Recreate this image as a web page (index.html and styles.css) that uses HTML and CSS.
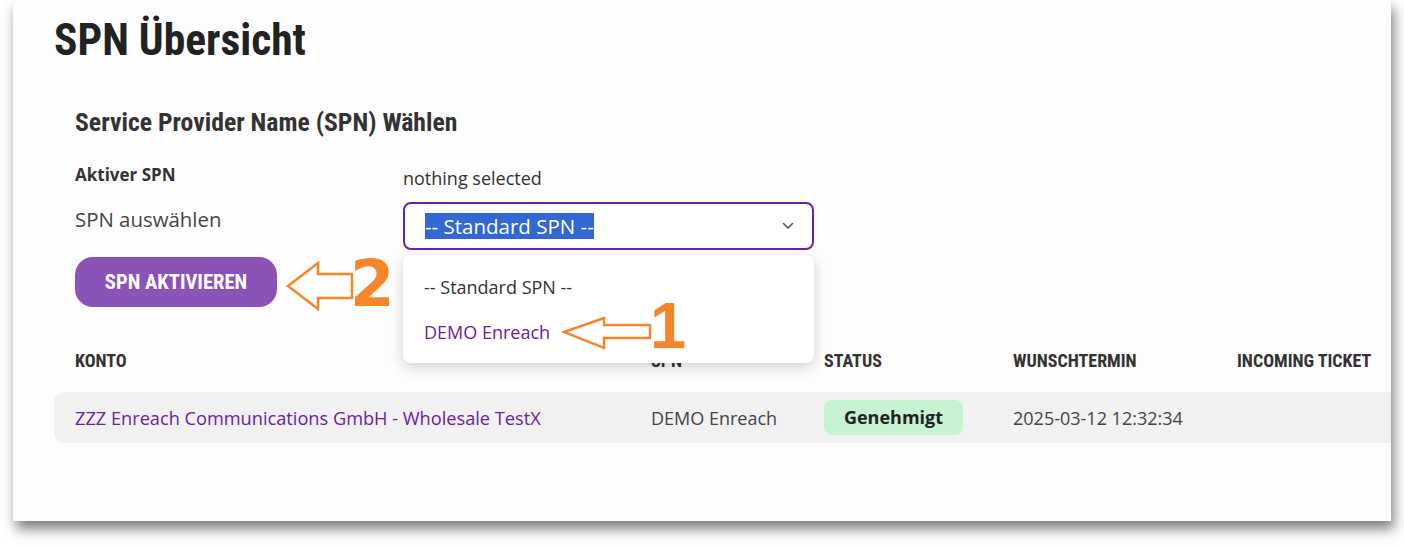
FILE: index.html
```html
<!DOCTYPE html>
<html>
  <head>
    <title>SPN Übersicht</title>
    <meta http-equiv="Content-Type" content="text/html; charset=UTF-8"/>
    <link rel="stylesheet" href="styles.css">
  </head>
  <body>
    <div class="frame">
      <main class="page">
        <h1>SPN Übersicht</h1>

        <section class="picker">
          <h2>Service Provider Name (SPN) Wählen</h2>
          <div class="form">
            <div class="label strong">Aktiver SPN</div>
            <div class="value">nothing selected</div>
            <div class="label">SPN auswählen</div>
            <div class="select-wrap">
              <div class="select">
                <span class="selected-text">-- Standard SPN --</span>
                <svg class="chevron" viewBox="0 0 12 8" width="12" height="8">
                  <path d="M1.5 1.5 L6 6 L10.5 1.5" fill="none" stroke="#555" stroke-width="1.6" stroke-linecap="round" stroke-linejoin="round"/>
                </svg>
              </div>
              <ul class="options">
                <li>-- Standard SPN --</li>
                <li class="accent">DEMO Enreach</li>
              </ul>
            </div>
          </div>
          <button class="btn">SPN AKTIVIEREN</button>
        </section>

        <div class="table">
          <div class="row head">
            <div>KONTO</div>
            <div>SPN</div>
            <div>STATUS</div>
            <div>WUNSCHTERMIN</div>
            <div>INCOMING TICKET</div>
          </div>
          <div class="row body">
            <div class="accent">ZZZ Enreach Communications GmbH - Wholesale TestX</div>
            <div>DEMO Enreach</div>
            <div><span class="badge">Genehmigt</span></div>
            <div>2025-03-12 12:32:34</div>
            <div></div>
          </div>
        </div>
      </main>

      <!-- annotations -->
      <svg class="arrow arrow-2" width="70" height="54" viewBox="0 0 70 54">
        <path d="M2 27 L32 4 L32 15 L66 15 L66 39 L32 39 L32 50 Z" fill="#fff" stroke="#f7852a" stroke-width="2.5" stroke-linejoin="miter"/>
      </svg>
      <span class="num num-2">2</span>
      <svg class="arrow arrow-1" width="92" height="38" viewBox="0 0 92 38">
        <path d="M2 17 L42 3 L42 10 L88 10 L88 23 L42 23 L42 33 Z" fill="#fff" stroke="#f7852a" stroke-width="2.5" stroke-linejoin="miter"/>
      </svg>
      <span class="num num-1">1</span>
    </div>
  </body>
</html>
```

FILE: styles.css
```css
body {
  margin: 0;
  padding-bottom: 25px;
  background: #fff;
  font-family: 'Open Sans', 'Noto Sans', sans-serif;
  color: #333;
}

.frame {
  position: relative;
  margin-left: 13px;
  width: 1378px;
  height: 521px;
  overflow: hidden;
  background: #fdfdfd;
  box-shadow: 3px 8px 12px rgba(0, 0, 0, 0.5);
}

.page {
  padding: 15px 0 0 41px;
}

h1, h2, .head, .btn {
  font-family: 'Roboto Condensed', 'DejaVu Sans Condensed', 'Liberation Sans Narrow', Roboto, sans-serif;
  font-weight: bold;
}

h1 {
  margin: 0;
  font-size: 43.5px;
  line-height: 52px;
  color: #222;
}

.picker {
  padding-left: 21px;
  margin-top: 40px;
}

h2 {
  margin: 0;
  font-size: 25.7px;
  line-height: 30px;
  color: #333;
}

.form {
  display: grid;
  grid-template-columns: 328px 411px;
  row-gap: 11px;
  margin-top: 25px;
}

.label {
  font-size: 20.4px;
  line-height: 34px;
  color: #444;
}
.label.strong {
  font-size: 17px;
  font-weight: bold;
  line-height: 26px;
  color: #333;
}
.value {
  font-size: 18px;
  line-height: 26px;
  padding-top: 3px;
  color: #333;
}

.select-wrap {
  position: relative;
}

.select {
  display: flex;
  align-items: center;
  justify-content: space-between;
  box-sizing: border-box;
  height: 48px;
  padding: 0 18px 0 20px;
  border: 2px solid #6c22a6;
  border-radius: 8px;
  background: #fff;
}

.selected-text {
  font-size: 20.5px;
  line-height: 26px;
  color: #fff;
  background: #3367d1;
}

.options {
  position: absolute;
  top: 53px;
  left: 0;
  width: 411px;
  box-sizing: border-box;
  height: 108px;
  margin: 0;
  padding: 20px 0 0 21px;
  list-style: none;
  background: #fff;
  border-radius: 8px;
  box-shadow: 0 4px 14px rgba(0, 0, 0, 0.18);
  z-index: 2;
}
.options li {
  font-size: 18px;
  line-height: 24px;
  color: #333;
}
.options li + li {
  margin-top: 21px;
}
.options li.accent {
  color: #6a22a3;
}

.accent {
  color: #6a22a3;
}

.btn {
  display: block;
  margin-top: 7px;
  width: 202px;
  height: 50px;
  border: 0;
  border-radius: 18px;
  background: #8b52b8;
  color: #fff;
  font-size: 20.6px;
}

.table {
  margin-top: 33px;
}

.row {
  display: grid;
  grid-template-columns: 576px 173px 189px 224px 1fr;
  align-items: center;
  width: 1400px;
  padding-left: 21px;
}

.row.head {
  height: 40px;
  font-size: 18px;
  color: #333;
}

.row.body {
  margin-top: 12px;
  height: 51px;
  background: #f1f1f1;
  border-radius: 10px 0 0 10px;
  font-size: 18px;
  color: #444;
}
.row.body .accent {
  font-size: 18.2px;
}

.badge {
  display: inline-block;
  width: 139px;
  height: 35px;
  line-height: 35px;
  text-align: center;
  border-radius: 8px;
  background: #c6f3d2;
  color: #222;
  font-weight: bold;
}

.arrow {
  position: absolute;
  z-index: 3;
}
.arrow-2 {
  left: 273px;
  top: 259px;
}
.arrow-1 {
  left: 549px;
  top: 315px;
}

.num {
  position: absolute;
  z-index: 3;
  font-family: 'DejaVu Sans', sans-serif;
  font-weight: bold;
  font-size: 64px;
  line-height: 1;
  color: #f7852a;
}
.num-2 {
  left: 337px;
  top: 252px;
}
.num-1 {
  left: 637px;
  top: 293px;
  font-family: 'Liberation Sans', sans-serif;
  font-size: 65px;
}
```
